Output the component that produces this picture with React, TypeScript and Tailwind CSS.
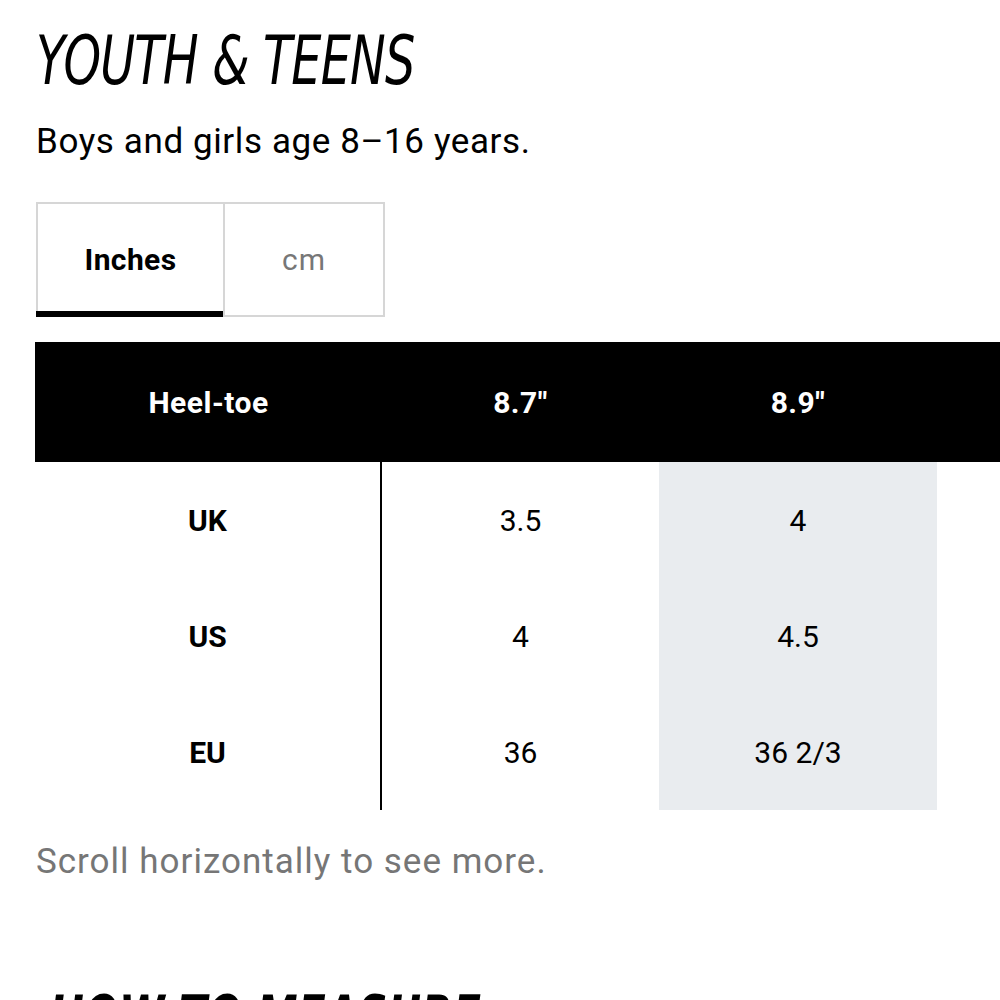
const rows = [
  { label: 'UK', values: ['3.5', '4'] },
  { label: 'US', values: ['4', '4.5'] },
  { label: 'EU', values: ['36', '36 2/3'] },
];

const heads = ['8.7"', '8.9"'];

const cols = 'grid grid-cols-[347px_277px_278px_100px] w-max';

export default function App() {
  return (
    <div className="w-[1000px] h-[1000px] overflow-hidden bg-white text-black font-['Roboto',sans-serif]">
      <div className="pl-[36px] pt-[26px]">
        <h1 className="font-['DejaVu_Sans_Condensed',sans-serif] italic text-[68px] leading-[70px] tracking-[-1px] origin-left scale-x-[0.78] whitespace-nowrap">
          YOUTH &amp; TEENS
        </h1>
        <p className="mt-[24px] text-[35px] leading-[44px] tracking-[0.6px]">Boys and girls age 8–16 years.</p>

        <div className="mt-[38px] flex w-[349px] h-[115px] border-2 border-[#d6d6d6]">
          <button className="relative w-[187px] border-r-2 border-[#d6d6d6] text-[30px] font-bold tracking-[0.4px]">
            Inches
            <span className="absolute left-[-2px] right-0 bottom-[-2px] h-[6px] bg-black" />
          </button>
          <button className="flex-1 text-[30px] text-[#777] tracking-[1px]">cm</button>
        </div>
      </div>

      <div className="mt-[25px] pl-[35px]">
        <div className={`${cols} h-[120px] bg-black text-white text-[30px] font-bold tracking-[0.5px] items-center text-center`}>
          <div>Heel-toe</div>
          {heads.map((h) => (
            <div key={h}>{h}</div>
          ))}
          <div />
        </div>
        <div className={cols}>
          <div className="border-r-2 border-black">
            {rows.map((r) => (
              <div key={r.label} className="h-[116px] flex items-center justify-center text-[30px] font-bold">
                {r.label}
              </div>
            ))}
          </div>
          {[0, 1].map((c) => (
            <div key={c} className={c === 1 ? 'bg-[#e9ecef]' : ''}>
              {rows.map((r) => (
                <div key={r.label} className="h-[116px] flex items-center justify-center text-[30px]">
                  {r.values[c]}
                </div>
              ))}
            </div>
          ))}
        </div>
      </div>

      <div className="pl-[36px]">
        <p className="mt-[30px] text-[35px] leading-[44px] tracking-[1px] text-[#767676]">Scroll horizontally to see more.</p>
        <h2 className="mt-[100px] pl-[18px] font-['DejaVu_Sans_Condensed',sans-serif] font-bold italic text-[62px] leading-[70px] tracking-[0px] origin-left scale-x-[0.74] whitespace-nowrap">
          HOW TO MEASURE
        </h2>
      </div>
    </div>
  );
}
